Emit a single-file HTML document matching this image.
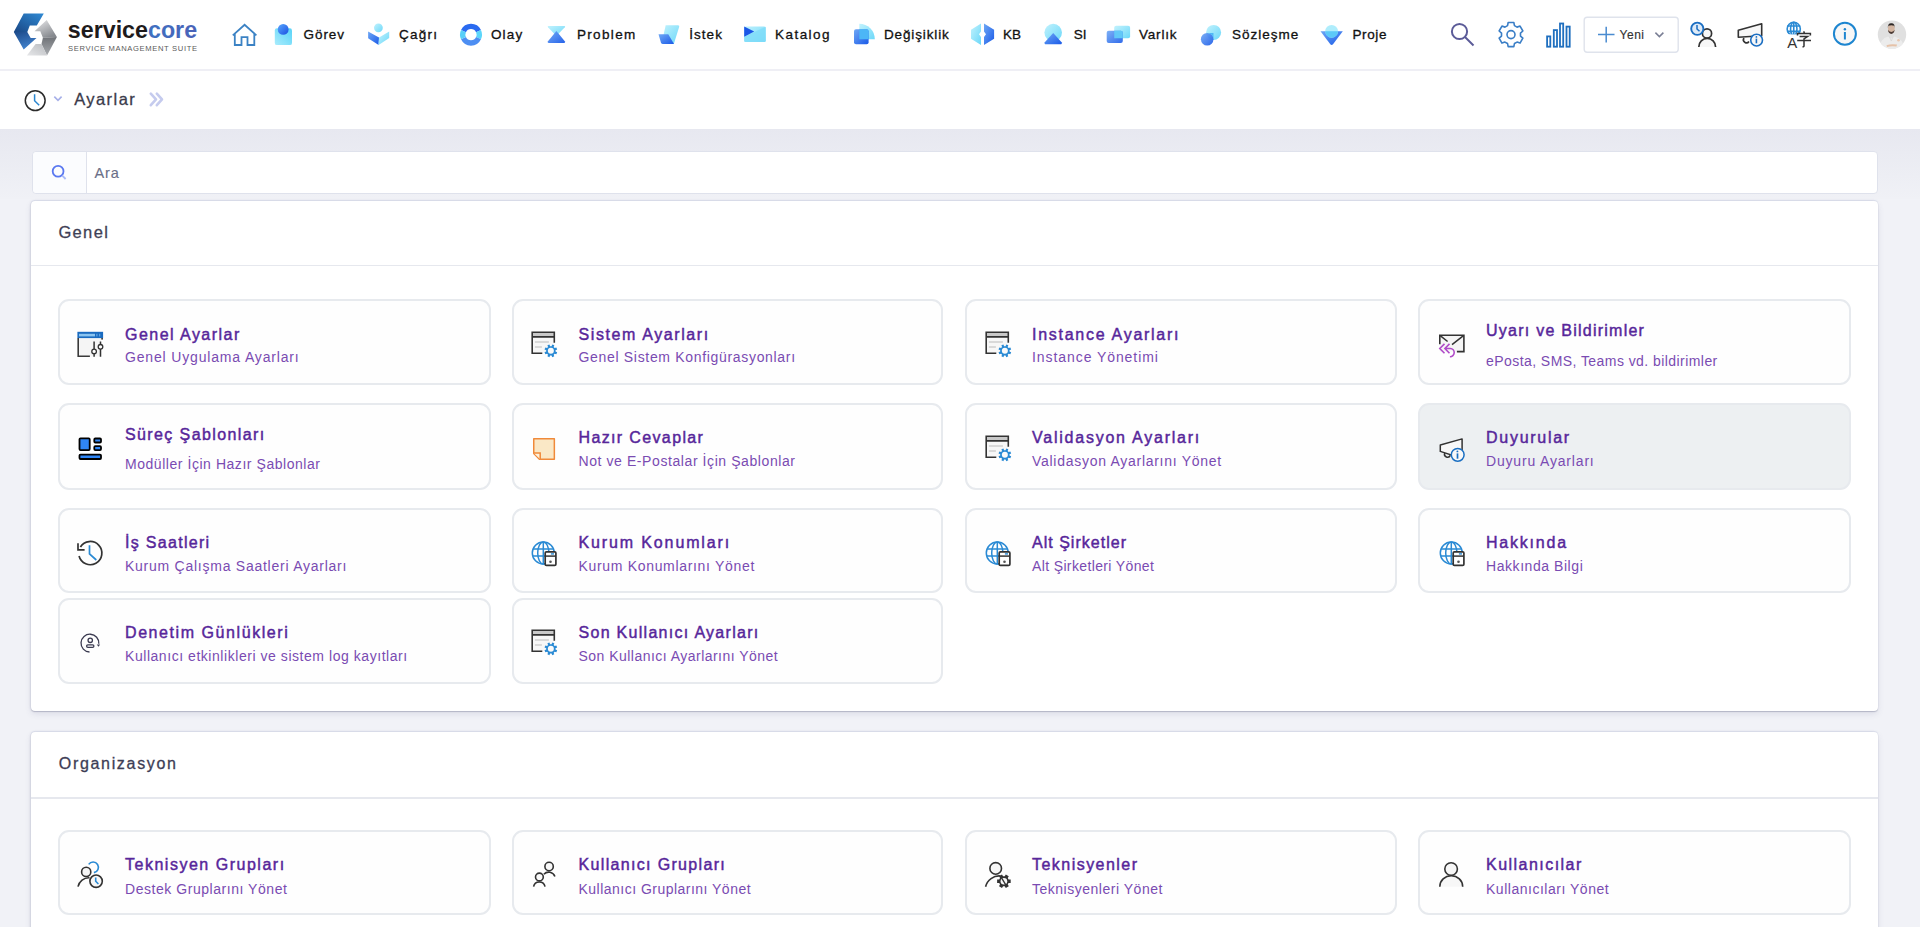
<!DOCTYPE html>
<html><head><meta charset="utf-8">
<style>
*{margin:0;padding:0;box-sizing:border-box}
html,body{width:1920px;height:927px;overflow:hidden;background:#f1f2f7;font-family:"Liberation Sans", sans-serif}
.abs{position:absolute}
#hdr{position:absolute;left:0;top:0;width:1920px;height:71px;background:#fff;border-bottom:2px solid #efeff5}
#bc{position:absolute;left:0;top:71px;width:1920px;height:58px;background:#fff}
#bgrad{position:absolute;left:0;top:129px;width:1920px;height:70px;background:linear-gradient(#e7e8f0,#f0f1f6)}
.card{position:absolute;left:31px;width:1847px;background:#fff;border-radius:4px;box-shadow:0 1px 1px rgba(60,65,100,.25), 0 3px 6px rgba(70,75,120,.12), -1px 0 2px rgba(70,75,120,.09), 0 -1px 1px rgba(190,195,220,.35)}
.dv{position:absolute;left:31px;width:1847px;height:1.5px;background:#e6e8ee}
.tile{position:absolute;border:2px solid #e7eaee;border-radius:11px}
.ic{position:absolute;width:36px;height:36px}
.tx{position:absolute;white-space:nowrap;height:0;line-height:0}
</style></head><body>
<svg width="0" height="0" style="position:absolute">
<defs>

<symbol id="i-genel" viewBox="0 0 36 36">
 <rect x="6.2" y="12" width="23" height="18.5" fill="#f5f5f5"/>
 <path d="M6.2 12 V30.2 H17.9" stroke="#3a3a3a" stroke-width="1.6" fill="none"/>
 <rect x="5.4" y="5.8" width="25.7" height="6.3" fill="#1a6bc0"/>
 <rect x="7" y="7.8" width="16" height="2.6" fill="#8ac4f0"/>
 <rect x="24.2" y="7.8" width="1.3" height="2.6" fill="#5aa0e0"/>
 <rect x="27" y="7.8" width="1.3" height="2.6" fill="#5aa0e0"/>
 <rect x="29.3" y="12" width="1.6" height="1.6" fill="#333"/>
 <path d="M22.1 15.5 V30.7 M28.5 15.5 V30.7" stroke="#333" stroke-width="1.5"/>
 <circle cx="22.1" cy="25.4" r="2.3" fill="#fff" stroke="#333" stroke-width="1.3"/>
 <circle cx="28.5" cy="20.8" r="2.3" fill="#fff" stroke="#333" stroke-width="1.3"/>
</symbol>
<symbol id="i-sys" viewBox="0 0 36 36">
 <rect x="6.2" y="6.2" width="22.1" height="21" fill="#f7f7f7"/>
 <rect x="6.2" y="6.2" width="22.1" height="4.6" fill="#c8c8c8"/>
 <path d="M6.2 10.9 H28.3 M28.3 16.7 V6.2 H6.2 V27.2 H16.3" stroke="#333" stroke-width="1.6" fill="none"/>
 <path d="M8.9 15.9 H22.9 M8.9 20.9 H15.9" stroke="#cfcfcf" stroke-width="1.5"/>
 <path d="M29.50 25.54 L31.18 26.31 L30.36 28.30 L28.63 27.65 L27.65 28.63 L28.30 30.36 L26.31 31.18 L25.54 29.50 L24.16 29.50 L23.39 31.18 L21.40 30.36 L22.05 28.63 L21.07 27.65 L19.34 28.30 L18.52 26.31 L20.20 25.54 L20.20 24.16 L18.52 23.39 L19.34 21.40 L21.07 22.05 L22.05 21.07 L21.40 19.34 L23.39 18.52 L24.16 20.20 L25.54 20.20 L26.31 18.52 L28.30 19.34 L27.65 21.07 L28.63 22.05 L30.36 21.40 L31.18 23.39 L29.50 24.16 Z" fill="#2a8ad4"/>
 <circle cx="24.85" cy="24.85" r="3.0" fill="#fafafa"/>
</symbol>
<symbol id="i-mail" viewBox="0 0 36 36">
 <rect x="5.8" y="9.3" width="24.1" height="16.3" fill="#f5f5f5"/>
 <path d="M5.8 18.3 V9.3 H29.9 V25.6 H22.9" stroke="#333" stroke-width="1.6" fill="none"/>
 <path d="M6.2 9.7 L13.6 15.5 M29.5 9.7 L18 18.6" stroke="#333" stroke-width="1.5"/>
 <path d="M10.5 17.9 L5.8 22.5 L10.5 27.2 M15.5 17.9 L10.9 22.5 L15.5 27.2 M10.9 22.5 H16.3 A4.1 4.1 0 0 1 15.9 30.7" stroke="#b04ac8" stroke-width="1.6" fill="none"/>
</symbol>
<symbol id="i-layout" viewBox="0 0 36 36">
 <g fill="#2f86f6" stroke="#000" stroke-width="1.8">
 <rect x="7.5" y="8.3" width="10.2" height="11.8" rx="1"/>
 <rect x="22.3" y="8.5" width="6.7" height="4" rx="1"/>
 <rect x="22.3" y="16.2" width="6.7" height="3.9" rx="1"/>
 <rect x="7.5" y="24.6" width="21.5" height="4.4" rx="1"/>
 </g>
</symbol>
<symbol id="i-note" viewBox="0 0 36 36">
 <path d="M7.75 8.75 H28.35 V29.15 H13.4 L7.75 23.5 Z" fill="#fae8c6" stroke="#f08a3a" stroke-width="1.5" stroke-linejoin="round"/>
 <path d="M7.8 23.1 H14.2 V29.3" fill="#fdf3dd" stroke="#f08a3a" stroke-width="1.5"/>
</symbol>
<symbol id="i-mega" viewBox="0 0 36 36">
 <path d="M6.3 15 L28.1 8.9 V28.5 L6.3 21.4 Z" fill="#f8f8f8" stroke="#333" stroke-width="1.5" stroke-linejoin="round"/>
 <path d="M10.8 23 A2.7 2.7 0 0 0 16.3 25.4" fill="none" stroke="#333" stroke-width="1.5"/>
 <circle cx="23.7" cy="24.85" r="6.4" fill="#f8f8f8" stroke="#1a6fc2" stroke-width="1.5"/>
 <circle cx="23.4" cy="21.4" r="0.95" fill="#1a6fc2"/>
 <path d="M23.5 23.4 V28.7" stroke="#1a6fc2" stroke-width="1.7"/>
</symbol>
<symbol id="i-hist" viewBox="0 0 36 36">
 <path d="M7.05 22.0 A11.6 11.6 0 1 0 8.4 13.0" stroke="#333" stroke-width="1.7" fill="none"/>
 <path d="M6 9.3 V15.8 H12.6" stroke="#333" stroke-width="1.7" fill="none"/>
 <path d="M17.5 11.3 V19.8 L24.3 26" stroke="#2a8ad4" stroke-width="1.7" fill="none"/>
</symbol>
<symbol id="i-globe" viewBox="0 0 36 36">
 <g stroke="#2a8ad4" stroke-width="1.5" fill="none">
 <circle cx="17.3" cy="19" r="11"/>
 <ellipse cx="17.3" cy="19" rx="5.6" ry="11"/>
 <path d="M17.3 8 V30 M7 15.1 H27.6 M6.8 22.1 H27.8"/>
 </g>
 <rect x="19.2" y="17.9" width="10.7" height="13.5" rx="1.2" fill="#fff" stroke="#333" stroke-width="1.7"/>
 <path d="M19.2 22.1 H29.9" stroke="#333" stroke-width="1.5"/>
 <rect x="24.9" y="19.2" width="3.1" height="1.4" fill="#2a8ad4"/>
 <circle cx="24.5" cy="27.8" r="1.3" fill="#555"/>
</symbol>
<symbol id="i-audit" viewBox="0 0 36 36">
 <g stroke="#3a3a50" stroke-width="1.3" fill="none">
 <path d="M17.5 28 A8.9 8.9 0 1 1 26.8 19.8"/>
 <circle cx="18.25" cy="16.3" r="2.2"/>
 <rect x="14.6" y="20.8" width="7.3" height="2.6" rx="1.3"/>
 </g>
 <path d="M24.8 20.4 H28.1 L26.45 22.7 Z" fill="#3a3a50"/>
</symbol>
<symbol id="i-techgrp" viewBox="0 0 36 36">
 <g stroke="#333" stroke-width="1.6">
 <circle cx="14.2" cy="15.9" r="4.6" fill="#f7f7f7"/>
 <path d="M6 30.7 A11 11 0 0 1 17.5 21.7" fill="none"/>
 </g>
 <path d="M16.7 8.4 A5.3 5.3 0 1 1 21.9 16.6" stroke="#2a8ad4" stroke-width="1.6" fill="none"/>
 <circle cx="24.1" cy="25.2" r="6.2" fill="#f7f7f7" stroke="#333" stroke-width="1.6"/>
 <path d="M23.7 21.4 V25.2 L26.4 28" stroke="#2a8ad4" stroke-width="1.6" fill="none"/>
</symbol>
<symbol id="i-usrgrp" viewBox="0 0 36 36">
 <g stroke="#333" stroke-width="1.6" fill="none">
 <circle cx="23.1" cy="10.5" r="4.2" fill="#fafafa"/>
 <path d="M17.9 18.3 A6.5 6.5 0 0 1 28.9 20.6"/>
 <circle cx="13.4" cy="21" r="3.9" fill="#fafafa"/>
 <path d="M7.6 30.7 A5.8 5.8 0 0 1 19 30.7"/>
 </g>
</symbol>
<symbol id="i-tech" viewBox="0 0 36 36">
 <g stroke="#333" stroke-width="1.6" fill="none">
 <circle cx="15.7" cy="12.4" r="5.8" fill="#f7f7f7"/>
 <path d="M5.6 30.7 A14 14 0 0 1 20.6 20"/>
 </g>
 <path d="M28.58 23.44 L30.69 23.50 L30.69 26.90 L28.58 26.96 L27.77 28.37 L28.76 30.23 L25.83 31.93 L24.71 30.13 L23.09 30.13 L21.97 31.93 L19.04 30.23 L20.03 28.37 L19.22 26.96 L17.11 26.90 L17.11 23.50 L19.22 23.44 L20.03 22.03 L19.04 20.17 L21.97 18.47 L23.09 20.27 L24.71 20.27 L25.83 18.47 L28.76 20.17 L27.77 22.03 Z" fill="#333"/>
 <circle cx="23.9" cy="25.2" r="3.3" fill="#f7f7f7"/>
 <path d="M21.3 21.5 L25.8 28.8" stroke="#333" stroke-width="1.4"/>
</symbol>
<symbol id="i-user" viewBox="0 0 36 36">
 <g stroke="#333" stroke-width="1.6" fill="#f7f7f7">
 <circle cx="17.1" cy="13" r="6.3"/>
 <path d="M5.8 30.7 A11.45 11 0 0 1 28.7 30.7"/>
 </g>
</symbol>

</defs></svg>
<div id="hdr"></div>
<div id="bc"></div>
<div id="bgrad"></div>

<svg class="abs" style="left:0;top:0" width="1920" height="130" viewBox="0 0 1920 130">
<defs>
 <linearGradient id="lgBlue" x1="0" y1="0" x2="1" y2="1"><stop offset="0" stop-color="#5aa8ff"/><stop offset="1" stop-color="#1a4fe0"/></linearGradient>
 <linearGradient id="lgCyan" x1="0" y1="1" x2="1" y2="0"><stop offset="0" stop-color="#a9ecfc"/><stop offset="1" stop-color="#58d3f8"/></linearGradient>
 <linearGradient id="lgCyanL" x1="0" y1="0" x2="1" y2="1"><stop offset="0" stop-color="#c2f2fd"/><stop offset="1" stop-color="#6cd8f9"/></linearGradient>
 <linearGradient id="lgBlue2" x1="0" y1="0" x2="1" y2="1"><stop offset="0" stop-color="#6fa8f5"/><stop offset="1" stop-color="#1a5ae8"/></linearGradient>
 <linearGradient id="logoB" x1="0" y1="0" x2="0.3" y2="1"><stop offset="0" stop-color="#2a7cc8"/><stop offset=".5" stop-color="#1b4f8e"/><stop offset="1" stop-color="#3d78c4"/></linearGradient>
 <linearGradient id="logoG" x1="0" y1="0" x2="1" y2="1"><stop offset="0" stop-color="#e0e2e5"/><stop offset=".55" stop-color="#8a8d92"/><stop offset="1" stop-color="#c9cbcf"/></linearGradient>
 <linearGradient id="coreG" x1="0" y1="0" x2="1" y2="0"><stop offset="0" stop-color="#2a8ad0"/><stop offset="1" stop-color="#4a62b8"/></linearGradient>
</defs>
<!-- logo -->
<linearGradient id="lb1" x1="0" y1="1" x2="1" y2="0"><stop offset="0" stop-color="#1a4785"/><stop offset="1" stop-color="#2f8ad4"/></linearGradient>
<linearGradient id="lb2" x1="0" y1="0" x2=".4" y2="1"><stop offset="0" stop-color="#1c4a8a"/><stop offset="1" stop-color="#4282cc"/></linearGradient>
<linearGradient id="lg1" x1="0" y1="0" x2=".6" y2="1"><stop offset="0" stop-color="#ececee"/><stop offset="1" stop-color="#878a8f"/></linearGradient>
<linearGradient id="lg2" x1="0" y1="0" x2="0" y2="1"><stop offset="0" stop-color="#6f7277"/><stop offset="1" stop-color="#a9acb0"/></linearGradient>
<linearGradient id="lg3" x1="1" y1="0" x2="0" y2="1"><stop offset="0" stop-color="#b9bbbf"/><stop offset="1" stop-color="#e6e7e9"/></linearGradient>
<path d="M23.7 13.5 H43.8 L36.8 25.5 H29.8 L27.3 31.9 H13.8 Z" fill="url(#lb1)"/>
<path d="M13.8 31.9 H27.3 L30.7 38 H36.5 L23.7 49.6 Z" fill="url(#lb2)"/>
<path d="M46.7 19.9 L56.9 37.1 L42.9 37.7 L40.3 31.3 H34.5 Z" fill="url(#lg1)"/>
<path d="M56.9 37.1 L47 55.5 L41.5 44.1 L42.9 37.7 Z" fill="url(#lg2)"/>
<path d="M41.5 44.1 L47 55.5 H26.9 L35.6 44.1 Z" fill="url(#lg3)"/>
<text x="67.8" y="37.7" font-family="Liberation Sans" font-weight="bold" font-size="24" textLength="129.3" lengthAdjust="spacingAndGlyphs" fill="#1e1b1c">service<tspan fill="url(#coreG)">core</tspan></text>
<text x="68" y="50.6" font-family="Liberation Sans" font-size="7.6" textLength="129" lengthAdjust="spacing" fill="#5a5a5a">SERVICE MANAGEMENT SUITE</text>

<!-- home -->
<path d="M232.8 35.3 L244.6 24.8 L256.4 35.3 M234.8 33.5 V45 H241.5 V37.2 H247.5 V45 H254.3 V33.5" fill="none" stroke="#3b82c4" stroke-width="1.8"/>
<!-- gorev -->
<rect x="274.8" y="28.2" width="17.2" height="16.9" rx="2.2" fill="url(#lgCyan)"/>
<circle cx="283.2" cy="29.4" r="5.4" fill="url(#lgBlue)"/>
<!-- cagri -->
<circle cx="378.4" cy="27.8" r="4.4" fill="url(#lgCyanL)"/>
<path d="M368.1 31.4 L379 37.6 L378.6 45 L368.1 38.2 Z" fill="url(#lgBlue2)"/>
<path d="M389.2 31.4 L389.2 38 L378.6 45 L379 37.6 Z" fill="url(#lgCyanL)"/>
<!-- olay -->
<g fill="none" stroke-width="5.4">
<path d="M463.48 31.19 A8.3 8.3 0 0 1 478.52 31.19" stroke="#2a6af0"/>
<path d="M478.52 31.19 A8.3 8.3 0 0 1 478.52 38.21" stroke="#5cd6fa"/>
<path d="M478.52 38.21 A8.3 8.3 0 0 1 463.48 38.21" stroke="#4d8ef2"/>
<path d="M463.48 38.21 A8.3 8.3 0 0 1 463.48 31.19" stroke="#58cff8"/>
</g>
<!-- problem -->
<path d="M548.5 26 H564.3 Q565.8 26 564.8 27.3 L556.4 36 L548 27.3 Q547 26 548.5 26 Z" fill="url(#lgCyanL)"/>
<path d="M556.4 31 L564.8 41.2 Q565.8 43 564 43 H548.8 Q547 43 548 41.2 Z" fill="url(#lgBlue2)" opacity=".95"/>
<!-- istek -->
<path d="M665.7 25.2 H678 Q679.6 25.2 679.2 26.8 L674 43.6 H661.6 Z" fill="url(#lgCyanL)"/>
<path d="M658.5 34.3 H668.3 L674 44 H663 Q661.6 44 661 42.8 Z" fill="url(#lgBlue2)"/>
<!-- katalog -->
<rect x="744.2" y="26.5" width="21.5" height="15.4" rx="1.5" fill="url(#lgCyanL)"/>
<path d="M744.2 36.8 L765.7 26.8 V40.4 Q765.7 41.9 764.2 41.9 H745.7 Q744.2 41.9 744.2 40.4 Z" fill="#7fdcf9" opacity=".8"/>
<path d="M744.2 26.5 L754.2 31.6 L744.2 36.8 Z" fill="#1a56e6"/>
<!-- degisiklik -->
<path d="M859.3 23.8 A15.5 15.5 0 0 1 874.8 39.3 H859.3 Z" fill="url(#lgCyanL)"/>
<rect x="854" y="29.3" width="14.6" height="14.9" rx="2" fill="url(#lgBlue2)"/>
<path d="M859.3 29.3 H866.6 Q868.6 29.3 868.6 31.3 V39.3 H859.3 Z" fill="#4cb6f6"/>
<!-- kb -->
<path d="M981 23.5 V31.5 L979 34.2 L981 37 V45 L971 38.8 V29.7 Z" fill="url(#lgCyanL)"/>
<path d="M984 23.5 L994.1 29.7 V38.8 L984 45 V37 L986 34.2 L984 31.5 Z" fill="url(#lgBlue2)"/>
<!-- si -->
<circle cx="1053.2" cy="32.6" r="8.8" fill="url(#lgCyanL)"/>
<path d="M1053.2 33 L1061.6 42.2 Q1062.4 44.3 1060.4 44.3 H1046 Q1044 44.3 1044.8 42.2 Z" fill="url(#lgBlue2)"/>
<!-- varlik -->
<rect x="1114.2" y="25.8" width="15.9" height="12.4" rx="2" fill="url(#lgCyanL)"/>
<rect x="1106.7" y="30.8" width="16.1" height="12.3" rx="2" fill="url(#lgBlue2)" opacity=".9"/>
<path d="M1114.2 30.8 H1120.8 Q1122.8 30.8 1122.8 32.8 V38.2 H1114.2 Z" fill="#62c8f8"/>
<!-- sozlesme -->
<circle cx="1213.6" cy="32.4" r="7.5" fill="url(#lgCyanL)"/>
<circle cx="1207.2" cy="39.3" r="6.3" fill="url(#lgBlue2)" opacity=".92"/>
<path d="M1206.2 33.05 A6.3 6.3 0 0 1 1213.5 39.3 L1213.5 33 Z" fill="#4fb8f7"/>
<!-- proje -->
<path d="M1320.5 31.3 H1342.8 L1333 44.3 Q1331.6 45.6 1330.3 44.3 Z" fill="url(#lgBlue2)"/>
<circle cx="1331.6" cy="31.3" r="6.4" fill="#a6ebfc" opacity=".9"/>
<path d="M1325.2 31.3 A6.4 6.4 0 0 0 1338 31.3 Z" fill="#5cc9f8"/>

<!-- right: search -->
<circle cx="1459.5" cy="31.5" r="7.6" fill="none" stroke="#5b5b98" stroke-width="2"/>
<path d="M1465 37 L1473.5 45.5" stroke="#5b5b98" stroke-width="2"/>
<!-- gear -->
<path d="M1507.54 25.64 L1508.17 22.53 L1513.83 22.53 L1514.46 25.64 L1517.03 27.13 L1520.04 26.11 L1522.87 31.02 L1520.48 33.12 L1520.48 36.08 L1522.87 38.18 L1520.04 43.09 L1517.03 42.07 L1514.46 43.56 L1513.83 46.67 L1508.17 46.67 L1507.54 43.56 L1504.97 42.07 L1501.96 43.09 L1499.13 38.18 L1501.52 36.08 L1501.52 33.12 L1499.13 31.02 L1501.96 26.11 L1504.97 27.13 Z" fill="none" stroke="#3a7ec6" stroke-width="1.6" stroke-linejoin="round"/>
<circle cx="1511" cy="34.6" r="4" fill="none" stroke="#3a7ec6" stroke-width="1.6"/>
<!-- bars -->
<g fill="none" stroke="#1f6fbf" stroke-width="1.8">
<rect x="1547.1" y="36.4" width="3.2" height="10.3"/>
<rect x="1553.8" y="30.1" width="3.2" height="16.6"/>
<rect x="1560" y="23.5" width="3.2" height="23.2"/>
<rect x="1566.5" y="26.6" width="3.2" height="20.1"/>
</g>
<!-- yeni button -->
<rect x="1584.2" y="17.2" width="94" height="35" rx="3" fill="#fff" stroke="#dfe3ec" stroke-width="1.4"/>
<path d="M1606.2 26.8 V42.4 M1598 34.6 H1614.5" stroke="#4a8bd0" stroke-width="1.5"/>
<path d="M1655.4 32.6 L1659.4 36.6 L1663.4 32.6" fill="none" stroke="#7a7f95" stroke-width="1.5"/>
<!-- user clock -->
<circle cx="1707" cy="33.4" r="4.6" fill="#f7f7f7" stroke="#333" stroke-width="1.7"/>
<path d="M1698.8 47 A8.4 8.6 0 0 1 1715.6 47" fill="#f7f7f7" stroke="#333" stroke-width="1.7"/>
<circle cx="1697.3" cy="28.75" r="6.1" fill="#ddeaf7" stroke="#1b6ec2" stroke-width="1.9"/>
<path d="M1697 25 V29 L1699.5 31.3" fill="none" stroke="#1b6ec2" stroke-width="1.5"/>
<!-- megaphone -->
<path d="M1738.3 30.3 L1761.7 23.7 V35.8 L1738.3 37.3 Z" fill="#f7f7f7" stroke="#333" stroke-width="1.6" stroke-linejoin="round"/>
<path d="M1744 38 A2.8 2.8 0 0 0 1749 41.5" fill="none" stroke="#333" stroke-width="1.6"/>
<circle cx="1756.6" cy="40.1" r="5.9" fill="#f7f7f7" stroke="#1b6ec2" stroke-width="1.6"/>
<circle cx="1756.4" cy="36.9" r=".9" fill="#1b6ec2"/>
<path d="M1756.4 38.6 V43.3" stroke="#1b6ec2" stroke-width="1.6"/>
<!-- translate -->
<clipPath id="glc"><rect x="1780" y="15" width="30" height="19.2"/></clipPath>
<g fill="none" stroke="#2a8ad4" stroke-width="1.6" clip-path="url(#glc)">
<circle cx="1793.75" cy="28.9" r="6.6"/>
<ellipse cx="1793.75" cy="28.9" rx="3.2" ry="6.6"/>
<path d="M1793.75 22.2 V35.3 M1787.3 26 H1800.2 M1787.3 31.4 H1800.2"/>
</g>
<text x="1787.2" y="47.5" font-family="Liberation Sans" font-size="15" fill="#333">A</text>
<path d="M1803.6 31.3 L1804.4 32.8 M1797.5 35.4 V33.6 H1810.4 V35.4 M1799.6 36.5 H1807.6 L1804 39 V46 Q1804 47 1802.5 46.8 M1797.2 40.5 H1811" fill="none" stroke="#333" stroke-width="1.5"/>
<!-- info -->
<circle cx="1844.9" cy="33.8" r="11" fill="#f7f7f7" stroke="#1e86d0" stroke-width="2"/>
<circle cx="1844.9" cy="29.2" r="1.2" fill="#1e86d0"/>
<path d="M1844.9 32 V39.5" stroke="#1e86d0" stroke-width="2"/>
<!-- avatar -->
<clipPath id="avc"><circle cx="1892" cy="34.6" r="14.2"/></clipPath>
<g clip-path="url(#avc)">
<rect x="1877" y="20" width="30" height="30" fill="#e0e0e0"/>
<path d="M1879 50 Q1880 38.5 1888 36.5 L1891.3 38.5 L1894.6 36.5 Q1903 38.5 1905 50 Z" fill="#ececec"/>
<path d="M1889.5 36.8 L1891.3 41 L1893.1 36.8" fill="none" stroke="#d6d6d6" stroke-width=".7"/>
<ellipse cx="1891.3" cy="28.8" rx="3.4" ry="4.2" fill="#d4b6a2"/>
<path d="M1887.8 28 Q1887.6 23 1891.3 23.2 Q1895 23 1894.8 28 L1894.3 25.8 Q1891.3 24.9 1888.3 25.8 Z" fill="#2e2826"/>
<path d="M1888 29.8 Q1888.4 33.6 1891.3 33.9 Q1894.2 33.6 1894.6 29.8 Q1893.9 31.8 1891.3 32 Q1888.7 31.8 1888 29.8 Z" fill="#4a3a34"/>
<path d="M1886.5 45.2 Q1891 43.6 1897 44.6 L1896.5 46.5 Q1891 45.6 1887 47 Z" fill="#e6c2a8"/>
<circle cx="1898.5" cy="40.2" r="1.3" fill="#e8c6ae"/>
</g>

<!-- breadcrumb -->
<circle cx="35.2" cy="100.6" r="9.9" fill="none" stroke="#2b2b2b" stroke-width="1.5"/>
<path d="M34.6 94.2 V100.8 L39.2 105.2" fill="none" stroke="#2a86d0" stroke-width="1.5"/>
<path d="M54.3 96.6 L58 100.3 L61.6 96.6" fill="none" stroke="#a7b0e8" stroke-width="1.6"/>
<path d="M150.8 93.6 L156 99.4 L150.8 105.2 M156.8 93.6 L162 99.4 L156.8 105.2" fill="none" stroke="#c5cbee" stroke-width="2.6" stroke-linecap="round" stroke-linejoin="round"/>
</svg>

<div class="abs" style="left:32px;top:151px;width:1846px;height:43px;background:#fff;border:1.5px solid #dfe2ec;border-radius:4px"></div>
<div class="abs" style="left:33px;top:152px;width:54px;height:41px;background:#fbfcfe;border-right:1.5px solid #dfe2ec;border-radius:4px 0 0 4px"></div>
<svg class="abs" style="left:46px;top:159px" width="24" height="24" viewBox="0 0 24 24"><circle cx="12.1" cy="12.25" r="5.4" fill="none" stroke="#5a78f0" stroke-width="1.8"/><path d="M16.3 16.6 L19.6 20" stroke="#a9baf6" stroke-width="1.8"/></svg>
<div class="card" style="top:201px;height:510px"></div>
<div class="dv" style="top:264.5px"></div>
<div class="card" style="top:732px;height:300px"></div>
<div class="dv" style="top:797px"></div>
<div class="tile" style="left:58px;top:299px;width:433px;height:86px;background:#fefefe"></div><svg class="ic" style="left:72px;top:326px"><use href="#i-genel"/></svg><div class="tile" style="left:512px;top:299px;width:431px;height:86px;background:#fefefe"></div><svg class="ic" style="left:526px;top:326px"><use href="#i-sys"/></svg><div class="tile" style="left:965px;top:299px;width:432px;height:86px;background:#fefefe"></div><svg class="ic" style="left:980px;top:326px"><use href="#i-sys"/></svg><div class="tile" style="left:1418px;top:299px;width:433px;height:86px;background:#fefefe"></div><svg class="ic" style="left:1434px;top:326px"><use href="#i-mail"/></svg><div class="tile" style="left:58px;top:403px;width:433px;height:87px;background:#fefefe"></div><svg class="ic" style="left:72px;top:430px"><use href="#i-layout"/></svg><div class="tile" style="left:512px;top:403px;width:431px;height:87px;background:#fefefe"></div><svg class="ic" style="left:526px;top:430px"><use href="#i-note"/></svg><div class="tile" style="left:965px;top:403px;width:432px;height:87px;background:#fefefe"></div><svg class="ic" style="left:980px;top:430px"><use href="#i-sys"/></svg><div class="tile" style="left:1418px;top:403px;width:433px;height:87px;background:#edf0f2"></div><svg class="ic" style="left:1434px;top:430px"><use href="#i-mega"/></svg><div class="tile" style="left:58px;top:508px;width:433px;height:85px;background:#fefefe"></div><svg class="ic" style="left:72px;top:534px"><use href="#i-hist"/></svg><div class="tile" style="left:512px;top:508px;width:431px;height:85px;background:#fefefe"></div><svg class="ic" style="left:526px;top:534px"><use href="#i-globe"/></svg><div class="tile" style="left:965px;top:508px;width:432px;height:85px;background:#fefefe"></div><svg class="ic" style="left:980px;top:534px"><use href="#i-globe"/></svg><div class="tile" style="left:1418px;top:508px;width:433px;height:85px;background:#fefefe"></div><svg class="ic" style="left:1434px;top:534px"><use href="#i-globe"/></svg><div class="tile" style="left:58px;top:598px;width:433px;height:86px;background:#fefefe"></div><svg class="ic" style="left:72px;top:624px"><use href="#i-audit"/></svg><div class="tile" style="left:512px;top:598px;width:431px;height:86px;background:#fefefe"></div><svg class="ic" style="left:526px;top:624px"><use href="#i-sys"/></svg><div class="tile" style="left:58px;top:830px;width:433px;height:85px;background:#fefefe"></div><svg class="ic" style="left:72px;top:856px"><use href="#i-techgrp"/></svg><div class="tile" style="left:512px;top:830px;width:431px;height:85px;background:#fefefe"></div><svg class="ic" style="left:526px;top:856px"><use href="#i-usrgrp"/></svg><div class="tile" style="left:965px;top:830px;width:432px;height:85px;background:#fefefe"></div><svg class="ic" style="left:980px;top:856px"><use href="#i-tech"/></svg><div class="tile" style="left:1418px;top:830px;width:433px;height:85px;background:#fefefe"></div><svg class="ic" style="left:1434px;top:856px"><use href="#i-user"/></svg>
<div class="tx" id="nav0" style="left:303.50px;top:34.62px;font-size:13.5px;color:#111;letter-spacing:0.950px;-webkit-text-stroke:0.3px #111;">Görev</div><div class="tx" id="nav1" style="left:399.00px;top:34.62px;font-size:13.5px;color:#111;letter-spacing:1.250px;-webkit-text-stroke:0.3px #111;">Çağrı</div><div class="tx" id="nav2" style="left:490.90px;top:34.62px;font-size:13.5px;color:#111;letter-spacing:1.199px;-webkit-text-stroke:0.3px #111;">Olay</div><div class="tx" id="nav3" style="left:576.90px;top:34.62px;font-size:13.5px;color:#111;letter-spacing:1.367px;-webkit-text-stroke:0.3px #111;">Problem</div><div class="tx" id="nav4" style="left:689.20px;top:34.62px;font-size:13.5px;color:#111;letter-spacing:1.050px;-webkit-text-stroke:0.3px #111;">İstek</div><div class="tx" id="nav5" style="left:775.10px;top:34.62px;font-size:13.5px;color:#111;letter-spacing:1.434px;-webkit-text-stroke:0.3px #111;">Katalog</div><div class="tx" id="nav6" style="left:884.00px;top:34.62px;font-size:13.5px;color:#111;letter-spacing:0.868px;-webkit-text-stroke:0.3px #111;">Değişiklik</div><div class="tx" id="nav7" style="left:1003.00px;top:34.62px;font-size:13.5px;color:#111;letter-spacing:0.000px;-webkit-text-stroke:0.3px #111;">KB</div><div class="tx" id="nav8" style="left:1073.80px;top:34.62px;font-size:13.5px;color:#111;letter-spacing:0.000px;-webkit-text-stroke:0.3px #111;">SI</div><div class="tx" id="nav9" style="left:1139.00px;top:34.62px;font-size:13.5px;color:#111;letter-spacing:0.800px;-webkit-text-stroke:0.3px #111;">Varlık</div><div class="tx" id="nav10" style="left:1232.10px;top:34.62px;font-size:13.5px;color:#111;letter-spacing:0.973px;-webkit-text-stroke:0.3px #111;">Sözleşme</div><div class="tx" id="nav11" style="left:1352.40px;top:34.62px;font-size:13.5px;color:#111;letter-spacing:0.650px;-webkit-text-stroke:0.3px #111;">Proje</div><div class="tx" id="bct" style="left:74.20px;top:98.88px;font-size:16.5px;color:#3a3a4a;letter-spacing:1.433px;-webkit-text-stroke:0.3px #3a3a4a;">Ayarlar</div><div class="tx" id="yeni" style="left:1619.50px;top:35.14px;font-size:12px;color:#333;letter-spacing:0.534px;-webkit-text-stroke:0.15px #333;">Yeni</div><div class="tx" id="ara" style="left:94.40px;top:172.78px;font-size:14.5px;color:#6b7088;letter-spacing:0.900px;-webkit-text-stroke:0.15px #6b7088;">Ara</div><div class="tx" id="genel" style="left:58.40px;top:232.18px;font-size:16.5px;color:#3f3f55;letter-spacing:1.350px;-webkit-text-stroke:0.3px #3f3f55;">Genel</div><div class="tx" id="org" style="left:58.75px;top:763.66px;font-size:16px;color:#3d3d55;letter-spacing:1.682px;-webkit-text-stroke:0.3px #3d3d55;">Organizasyon</div><div class="tx" id="t0" style="left:125.00px;top:334.96px;font-size:16px;color:#57269a;letter-spacing:1.466px;-webkit-text-stroke:0.45px #57269a;">Genel Ayarlar</div><div class="tx" id="s0" style="left:125.00px;top:356.65px;font-size:14px;color:#7a4bb2;letter-spacing:0.834px;">Genel Uygulama Ayarları</div><div class="tx" id="t1" style="left:578.50px;top:334.96px;font-size:16px;color:#57269a;letter-spacing:1.600px;-webkit-text-stroke:0.45px #57269a;">Sistem Ayarları</div><div class="tx" id="s1" style="left:578.50px;top:356.65px;font-size:14px;color:#7a4bb2;letter-spacing:0.679px;">Genel Sistem Konfigürasyonları</div><div class="tx" id="t2" style="left:1032.00px;top:334.96px;font-size:16px;color:#57269a;letter-spacing:1.726px;-webkit-text-stroke:0.45px #57269a;">Instance Ayarları</div><div class="tx" id="s2" style="left:1032.00px;top:356.65px;font-size:14px;color:#7a4bb2;letter-spacing:0.929px;">Instance Yönetimi</div><div class="tx" id="t3" style="left:1486.00px;top:330.86px;font-size:16px;color:#57269a;letter-spacing:1.247px;-webkit-text-stroke:0.45px #57269a;">Uyarı ve Bildirimler</div><div class="tx" id="s3" style="left:1486.00px;top:360.65px;font-size:14px;color:#7a4bb2;letter-spacing:0.438px;">ePosta, SMS, Teams vd. bildirimler</div><div class="tx" id="t4" style="left:125.00px;top:435.16px;font-size:16px;color:#57269a;letter-spacing:1.394px;-webkit-text-stroke:0.45px #57269a;">Süreç Şablonları</div><div class="tx" id="s4" style="left:125.00px;top:463.65px;font-size:14px;color:#7a4bb2;letter-spacing:0.545px;">Modüller İçin Hazır Şablonlar</div><div class="tx" id="t5" style="left:578.50px;top:437.96px;font-size:16px;color:#57269a;letter-spacing:1.361px;-webkit-text-stroke:0.45px #57269a;">Hazır Cevaplar</div><div class="tx" id="s5" style="left:578.50px;top:460.95px;font-size:14px;color:#7a4bb2;letter-spacing:0.583px;">Not ve E-Postalar İçin Şablonlar</div><div class="tx" id="t6" style="left:1032.00px;top:437.96px;font-size:16px;color:#57269a;letter-spacing:1.766px;-webkit-text-stroke:0.45px #57269a;">Validasyon Ayarları</div><div class="tx" id="s6" style="left:1032.00px;top:460.95px;font-size:14px;color:#7a4bb2;letter-spacing:0.719px;">Validasyon Ayarlarını Yönet</div><div class="tx" id="t7" style="left:1486.00px;top:437.96px;font-size:16px;color:#57269a;letter-spacing:1.725px;-webkit-text-stroke:0.45px #57269a;">Duyurular</div><div class="tx" id="s7" style="left:1486.00px;top:460.95px;font-size:14px;color:#7a4bb2;letter-spacing:0.823px;">Duyuru Ayarları</div><div class="tx" id="t8" style="left:125.00px;top:543.16px;font-size:16px;color:#57269a;letter-spacing:1.300px;-webkit-text-stroke:0.45px #57269a;">İş Saatleri</div><div class="tx" id="s8" style="left:125.00px;top:566.15px;font-size:14px;color:#7a4bb2;letter-spacing:0.747px;">Kurum Çalışma Saatleri Ayarları</div><div class="tx" id="t9" style="left:578.50px;top:543.16px;font-size:16px;color:#57269a;letter-spacing:1.871px;-webkit-text-stroke:0.45px #57269a;">Kurum Konumları</div><div class="tx" id="s9" style="left:578.50px;top:566.15px;font-size:14px;color:#7a4bb2;letter-spacing:0.679px;">Kurum Konumlarını Yönet</div><div class="tx" id="t10" style="left:1032.00px;top:543.16px;font-size:16px;color:#57269a;letter-spacing:1.017px;-webkit-text-stroke:0.45px #57269a;">Alt Şirketler</div><div class="tx" id="s10" style="left:1032.00px;top:566.15px;font-size:14px;color:#7a4bb2;letter-spacing:0.364px;">Alt Şirketleri Yönet</div><div class="tx" id="t11" style="left:1486.00px;top:543.16px;font-size:16px;color:#57269a;letter-spacing:1.787px;-webkit-text-stroke:0.45px #57269a;">Hakkında</div><div class="tx" id="s11" style="left:1486.00px;top:566.15px;font-size:14px;color:#7a4bb2;letter-spacing:0.558px;">Hakkında Bilgi</div><div class="tx" id="t12" style="left:125.00px;top:632.66px;font-size:16px;color:#57269a;letter-spacing:1.571px;-webkit-text-stroke:0.45px #57269a;">Denetim Günlükleri</div><div class="tx" id="s12" style="left:125.00px;top:655.85px;font-size:14px;color:#7a4bb2;letter-spacing:0.547px;">Kullanıcı etkinlikleri ve sistem log kayıtları</div><div class="tx" id="t13" style="left:578.50px;top:632.66px;font-size:16px;color:#57269a;letter-spacing:1.290px;-webkit-text-stroke:0.45px #57269a;">Son Kullanıcı Ayarları</div><div class="tx" id="s13" style="left:578.50px;top:655.85px;font-size:14px;color:#7a4bb2;letter-spacing:0.472px;">Son Kullanıcı Ayarlarını Yönet</div><div class="tx" id="t14" style="left:125.00px;top:864.66px;font-size:16px;color:#57269a;letter-spacing:1.512px;-webkit-text-stroke:0.45px #57269a;">Teknisyen Grupları</div><div class="tx" id="s14" style="left:125.00px;top:888.65px;font-size:14px;color:#7a4bb2;letter-spacing:0.543px;">Destek Gruplarını Yönet</div><div class="tx" id="t15" style="left:578.50px;top:864.66px;font-size:16px;color:#57269a;letter-spacing:1.335px;-webkit-text-stroke:0.45px #57269a;">Kullanıcı Grupları</div><div class="tx" id="s15" style="left:578.50px;top:888.65px;font-size:14px;color:#7a4bb2;letter-spacing:0.480px;">Kullanıcı Gruplarını Yönet</div><div class="tx" id="t16" style="left:1032.00px;top:864.66px;font-size:16px;color:#57269a;letter-spacing:1.464px;-webkit-text-stroke:0.45px #57269a;">Teknisyenler</div><div class="tx" id="s16" style="left:1032.00px;top:888.65px;font-size:14px;color:#7a4bb2;letter-spacing:0.513px;">Teknisyenleri Yönet</div><div class="tx" id="t17" style="left:1486.00px;top:864.66px;font-size:16px;color:#57269a;letter-spacing:1.463px;-webkit-text-stroke:0.45px #57269a;">Kullanıcılar</div><div class="tx" id="s17" style="left:1486.00px;top:888.65px;font-size:14px;color:#7a4bb2;letter-spacing:0.514px;">Kullanıcıları Yönet</div>
</body></html>
